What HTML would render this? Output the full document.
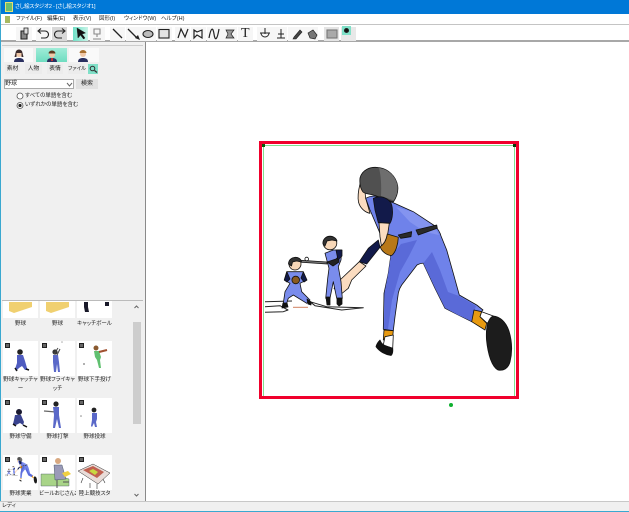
<!DOCTYPE html>
<html lang="ja"><head><meta charset="utf-8">
<style>
html,body{margin:0;padding:0;width:629px;height:512px;overflow:hidden;background:#f0f0f0}
body{position:relative;font-family:"Liberation Sans","Noto Sans CJK JP",sans-serif;color:#222;filter:blur(.25px);font-feature-settings:"palt"}
.a{position:absolute}
.t{position:absolute;font-size:5.5px;line-height:9px;white-space:nowrap;text-align:center;color:#222}
.l{position:absolute;width:37px;font-size:5.5px;line-height:8.500px;text-align:center;color:#222;white-space:nowrap;overflow:hidden}
.cell{position:absolute;width:35px;height:35px;background:#fff}
.cell i{position:absolute;left:2px;top:2px;width:3px;height:3px;border:1px solid #222;background:#666}
.tb{position:absolute;top:27px;width:15px;height:14px;background:#f6f6f6}
.tag{position:absolute;top:64px;height:10px;background:#ececec;font-size:5.8px;line-height:10px;text-align:center;color:#222;white-space:nowrap}
</style></head><body>
<div class="a" style="left:0;top:0;width:629px;height:14px;background:#0078d7"></div>
<div class="a" style="left:5px;top:2px;width:8px;height:10px;background:#6cc070;border:1px solid #e8e070;box-sizing:border-box"></div>
<div class="t" style="left:15px;top:2.500px;color:#fff;font-size:5.500px;letter-spacing:-.2px">さし絵スタジオ2 - [さし絵スタジオ1]</div>
<div class="a" style="left:0;top:14px;width:629px;height:10px;background:#fff"></div>
<div class="a" style="left:5px;top:16px;width:5px;height:7px;background:#a8b860"></div>
<div class="t" style="left:16px;top:15px">ファイル(F)</div>
<div class="t" style="left:47px;top:15px">編集(E)</div>
<div class="t" style="left:73px;top:15px">表示(V)</div>
<div class="t" style="left:99px;top:15px">図形(I)</div>
<div class="t" style="left:124px;top:15px">ウィンドウ(W)</div>
<div class="t" style="left:161px;top:15px">ヘルプ(H)</div>
<div class="a" style="left:0;top:24px;width:629px;height:18px;background:#fff;border-top:1px solid #c4c4c4;border-bottom:2px solid #a8a8a8;box-sizing:border-box"></div>
<div class="tb" style="left:16px;width:16px"></div><div class="tb" style="left:36px"></div><div class="tb" style="left:52px;background:#d8d8d8"></div>
<div class="tb" style="left:73px;background:linear-gradient(90deg,#6fe0c6,#c8f4e8)"></div><div class="tb" style="left:90px"></div>
<div class="tb" style="left:110px"></div><div class="tb" style="left:126px"></div><div class="tb" style="left:141px"></div><div class="tb" style="left:157px"></div><div class="tb" style="left:175px"></div><div class="tb" style="left:191px"></div><div class="tb" style="left:207px"></div><div class="tb" style="left:222px"></div><div class="tb" style="left:238px"></div><div class="tb" style="left:257px"></div><div class="tb" style="left:272px"></div><div class="tb" style="left:288px"></div><div class="tb" style="left:303px"></div>
<div class="tb" style="left:324px;background:#e4e4e4"></div><div class="tb" style="left:341px;background:#e8e8e8"></div>
<div class="a" style="left:342px;top:26px;width:9px;height:9px;background:#7fe0c8"></div>
<svg class="a" style="left:0;top:0" width="629" height="42" viewBox="0 0 629 42" fill="none" stroke="#222" stroke-width="1.100">
<path d="M21 31h6v8h-6z" fill="#888"/><path d="M24 28h4v6h-4z" fill="#ddd" stroke-width=".8"/>
<path d="M41 38h4a3.500 3.500 0 0 0 0-7h-6M41 28.500l-3 2.500 3 2.500"/>
<path d="M62 38h-4a3.500 3.500 0 0 1 0-7h6M62 28.500l3 2.500-3 2.500"/>
<path d="M77 28l1 10 2.500-3 3 4 1.500-1-3-4 3.500-1z" fill="#111" stroke-width=".5"/>
<path d="M94 29h6v5h-6zM97 34v3M93 39h8" stroke="#888"/>
<path d="M113 29l9 9M128 29l9 9" stroke-width="1.300"/><path d="M140 40l-5-2 3-3z" fill="#222" stroke="none"/>
<ellipse cx="148" cy="34" rx="5" ry="3.500" fill="#bbb"/>
<rect x="159" y="29.500" width="10" height="8.500" fill="#e4e4e4"/>
<path d="M178 38l3-9 4 8 3-8M194 30l3 2 5-2v8l-5-3-3 3zM209 38c2-11 4-11 5-4s3 7 5-5" stroke-width="1.200"/>
<path d="M226 30h8l-3 4 3 4h-8l2-4z" fill="#999" stroke-width=".7"/>
<path d="M261 33a4 4 0 1 0 8 0M265 28v6M260 33h10M277 38h8M281 29v9M278 34h6" stroke-width="1"/>
<path d="M293 39l1-2 6-7 2 2-6 7z" fill="#444" stroke-width=".6"/>
<path d="M308 33l5-3 4 5-2 4-5-1z" fill="#777" stroke-width=".7"/>
<rect x="327" y="30" width="10" height="8" fill="#aaa" stroke="#777"/>
<circle cx="346.500" cy="30.500" r="2" fill="#111"/>
</svg>
<div class="t" style="left:241px;top:27px;font:14px/14px 'Liberation Serif',serif;color:#222">T</div>

<div class="a" style="left:0;top:42px;width:146px;height:459px;background:#f0f0f0"></div>
<div class="a" style="left:2px;top:45px;width:141px;height:1px;background:#ccc"></div>
<div class="a" style="left:145px;top:42px;width:1px;height:459px;background:#8a8a8a"></div>
<div class="a" style="left:146px;top:42px;width:483px;height:459px;background:#fff"></div>
<div class="a" style="left:0;top:0;width:1px;height:512px;background:#3aa8d0"></div>

<div class="a" style="left:4px;top:48px;width:29px;height:14px;background:#f9f9f9"></div>
<div class="a" style="left:36px;top:48px;width:31px;height:14px;background:linear-gradient(#a0ecd8,#6fdcc0)"></div>
<div class="a" style="left:69px;top:48px;width:30px;height:14px;background:#f9f9f9"></div>
<svg class="a" style="left:0;top:48px" width="110" height="15" viewBox="0 0 110 15">
<circle cx="19" cy="6" r="3" fill="#f0c8a8"/><path d="M15.500 5a3.500 3.500 0 0 1 7 0l1 4h-2v-4h-5v4h-2z" fill="#3a2a2a"/><path d="M14 14c0-3 2-4 5-4s5 1 5 4z" fill="#2a3060"/>
<circle cx="52" cy="6.500" r="3" fill="#f0c8a8"/><path d="M48.500 5.500a3.500 3 0 0 1 7 0z" fill="#5a3a20"/><path d="M47 14c0-3 2-4 5-4s5 1 5 4z" fill="#2a3060"/><path d="M51 10h2v3h-2z" fill="#c03030"/>
<circle cx="83" cy="6" r="3" fill="#f0c8a8"/><path d="M79.500 5a3.500 3 0 0 1 7 0z" fill="#a87030"/><path d="M78 14c0-3 2-4 5-4s5 1 5 4z" fill="#2a3060"/>
</svg>
<div class="tag" style="left:5px;width:15px">素材</div>
<div class="tag" style="left:25px;width:17px">人物</div>
<div class="tag" style="left:47px;width:16px">表情</div>
<div class="tag" style="left:68px;width:17px;font-size:5.200px">ファイル</div>
<div class="tag" style="left:88px;width:10px;background:#7fe0c8"></div>
<svg class="a" style="left:88px;top:64px" width="10" height="10" viewBox="0 0 10 10" fill="none" stroke="#333"><circle cx="4.500" cy="4.500" r="2.300"/><path d="M6.500 6.500l2.500 2" stroke-width="1.300"/></svg>
<div class="a" style="left:4px;top:79px;width:70px;height:10px;background:#fff;border:1px solid #aaa;box-sizing:border-box"></div>
<div class="t" style="left:5px;top:79.500px;font-size:6px">野球</div>
<svg class="a" style="left:66px;top:82px" width="7" height="5" fill="none" stroke="#666"><path d="M1 1l2.500 3 2.500-3"/></svg>
<div class="a" style="left:76px;top:79px;width:22px;height:10px;background:#e1e1e1;font-size:6px;line-height:10px;text-align:center">検索</div>
<svg class="a" style="left:16px;top:91px" width="10" height="20" fill="#fff" stroke="#555" stroke-width=".8"><circle cx="4" cy="5" r="3"/><circle cx="4" cy="14.500" r="3"/><circle cx="4" cy="14.500" r="1.600" fill="#222" stroke="none"/></svg>
<div class="t" style="left:25px;top:91.500px">すべての単語を含む</div>
<div class="t" style="left:25px;top:101px">いずれかの単語を含む</div>

<!-- list -->
<div class="a" style="left:2px;top:300px;width:141px;height:1px;background:#bbb"></div>
<div class="a" style="left:3px;top:301px;width:35px;height:17px;background:#fff"></div>
<div class="a" style="left:40px;top:301px;width:35px;height:17px;background:#fff"></div>
<div class="a" style="left:77px;top:301px;width:35px;height:17px;background:#fff"></div>
<svg class="a" style="left:3px;top:301px" width="110" height="17" viewBox="0 0 110 17">
<path d="M6 1h23v5l-18 6-5-2z" fill="#f0d070"/><path d="M43 1h23v5l-18 6-5-2z" fill="#f0d070"/>
<path d="M81 1h4v5l1 5h-4l-1-5zM102 1h4v4h-4z" fill="#181828"/>
</svg>
<div class="l" style="left:2px;top:320px">野球</div>
<div class="l" style="left:39px;top:320px">野球</div>
<div class="l" style="left:76px;top:320px">キャッチボール</div>

<div class="cell" style="left:3px;top:341px"><i></i></div>
<div class="cell" style="left:40px;top:341px"><i></i></div>
<div class="cell" style="left:77px;top:341px"><i></i></div>
<div class="l" style="left:2px;top:376px">野球キャッチャ<br>ー</div>
<div class="l" style="left:39px;top:376px">野球フライキャ<br>ッチ</div>
<div class="l" style="left:76px;top:376px">野球下手投げ</div>

<div class="cell" style="left:3px;top:398px"><i></i></div>
<div class="cell" style="left:40px;top:398px"><i></i></div>
<div class="cell" style="left:77px;top:398px"><i></i></div>
<div class="l" style="left:2px;top:433px">野球守備</div>
<div class="l" style="left:39px;top:433px">野球打撃</div>
<div class="l" style="left:76px;top:433px">野球投球</div>

<div class="cell" style="left:3px;top:455px"><i></i></div>
<div class="cell" style="left:40px;top:455px"><i></i></div>
<div class="cell" style="left:77px;top:455px"><i></i></div>
<div class="l" style="left:2px;top:490px">野球実業</div>
<div class="l" style="left:39px;top:490px;height:9px">ビールおじさん2</div>
<div class="l" style="left:76px;top:490px;height:9px">陸上競技スタ</div>

<svg class="a" style="left:0;top:335px" width="115" height="160" viewBox="0 335 115 160">
<!-- row2 -->
<g><circle cx="20" cy="352" r="2.800" fill="#222"/><path d="M17 355h6l2 6 2 7 1 2-3 0-3-4-3 2-3 3-1-2 2-6z" fill="#4f5cc0"/><path d="M15 368l2 3M26 369l3 1" stroke="#111" stroke-width="1.500"/>
<circle cx="55" cy="352" r="2.600" fill="#333"/><path d="M53 355h5l1 7 1 10h-2l-1-8-1 8h-2l-1-10z" fill="#5a68c8"/><path d="M54 354l4-6M57 355l3-6" stroke="#444"/><circle cx="62" cy="342" r=".8" fill="#aaa"/>
<circle cx="96" cy="348" r="2.500" fill="#8a5a30"/><path d="M94 351h5l2 6-1 3 1 8h-2l-2-8-2-3z" fill="#60c070"/><path d="M99 352l8-2" stroke="#a05030" stroke-width="2"/><circle cx="84" cy="364" r="1" fill="#999"/></g>
<!-- row3 -->
<g><circle cx="19" cy="412" r="3" fill="#1a1a30"/><path d="M15 415h6l3 7-1 3-3-2-4 2-3-1 1-4z" fill="#3a4490"/><path d="M13 424l3 2M23 425l4 2" stroke="#111" stroke-width="1.500"/>
<path d="M44 411l12 1" stroke="#666" stroke-width="1.200"/><circle cx="56" cy="404" r="2.600" fill="#222"/><path d="M53 407h6v8l2 13h-2l-2-9-2 9h-2l1-13z" fill="#5a68c8"/>
<circle cx="94" cy="410" r="2.400" fill="#222"/><path d="M92 413h5v6l-1 3 1 5h-2l-1-4-2 4-1-1 1-6z" fill="#5a68c8"/><circle cx="81" cy="416" r=".8" fill="#888"/></g>
<!-- row4 -->
<g transform="translate(-29.500 435.300) scale(.13)"><use href="#fig"/></g>
<g>
<path d="M41 474h16l6 3 6 2v7h-28z" fill="#a8d488" stroke="#456" stroke-width=".4"/><circle cx="58" cy="461" r="3" fill="#d8a880"/><path d="M54 465h8l4 14-11 1z" fill="#9a9ab8" stroke="#345" stroke-width=".4"/><path d="M62 473l6-2 3 3-6 3z" fill="#f0d040"/><path d="M63 482h6M57 480v8" stroke="#555"/>
<path d="M78 471l15-7 17 9-12 11z" fill="#e8dcd8" stroke="#333" stroke-width=".5"/><path d="M83 470l10-4 11 6-7 6z" fill="#c06050"/><path d="M89 471l4-2 5 3-3 3z" fill="#c8d840"/><path d="M83 478l-2 5M90 483v5M97 484v5M103 479l2 4" stroke="#333" stroke-width=".6"/></g>
</svg>
<div class="a" style="left:133px;top:322px;width:8px;height:102px;background:#cdcdcd"></div>
<svg class="a" style="left:132px;top:301px" width="10" height="200" fill="none" stroke="#666"><path d="M2.500 7l2-2 2 2M2.500 193l2 2 2-2"/></svg>

<!-- status -->
<div class="a" style="left:0;top:501px;width:629px;height:11px;background:#f0f0f0;border-top:1px solid #c8c8c8;box-sizing:border-box"></div>
<div class="t" style="left:2px;top:502px">レディ</div>
<div class="a" style="left:0;top:511px;width:629px;height:1px;background:#3aa8d0"></div>

<!-- canvas frame -->
<div class="a" style="left:259px;top:141px;width:260px;height:258px;border:3px solid #f0002c;box-sizing:border-box"></div>
<div class="a" style="left:263px;top:145px;width:252px;height:251px;border:1px solid #80e090;border-bottom:0;box-sizing:border-box"></div>
<div class="a" style="left:262px;top:144px;width:3px;height:3px;background:#0a5a0a"></div>
<div class="a" style="left:513px;top:144px;width:3px;height:3px;background:#0a3a0a"></div>
<div class="a" style="left:449px;top:403px;width:4px;height:4px;border-radius:50%;background:#10b030"></div>

<svg class="a" style="left:0;top:0" width="629" height="512" viewBox="0 0 629 512" stroke="#111" stroke-width=".8" stroke-linejoin="round">
<g id="fig">
<!-- plate -->
<path d="M265 301.700L292 301M265 306.700L280 305.700 288 310 283.300 311.700 265 312.300M310 301.700L326.700 306.700 363.300 307.700 341.700 310 315 305.700z" fill="none" stroke="#222" stroke-width="1"/>
<path d="M293 307.300h15" stroke="#d08060" stroke-width="1"/>
<!-- main figure -->
<path d="M360 184C358.500 190 357.500 197 358.500 202 360 208 365 212.500 370 213.300L365.700 198.300 365 192z" fill="#fbdcc0"/>
<path d="M360 178C362 170 370 166.500 378 167.500 388 168.500 396 176 397.700 186 398.500 192 396 198 393.300 202L375 195.500C370 194 365 194 363 192 360 188 359.500 183 360 178z" fill="#505050"/>
<path d="M379 168C388 169 396 176 397.500 186 398 192 396 197 393.800 200.500L381 196C381.500 185 381 176 379 168z" fill="#6e6e6e" stroke="none"/>
<path d="M365.700 198.300C368 197 372 196 375 196L393.300 202.700 413.300 211.700 435 226C438 229 440 232 441 236L446.700 250 453.300 273.300 459.300 295 476.700 305 483 310 471.700 321.700 458.300 315 445 308.300 435 288.300 423.300 263.300C421 263 419 264 417 265L401.700 285C399 289 398.800 291 398.300 293.300L395 316.700 393.300 330.700 383.300 329.300 384 293.300 388.300 273.300 390.700 256.700 386.700 238.300 380 233.300 370 210z" fill="#6f82ea"/>
<path d="M390.700 256.700L401 244 417 240 409 256 400 272 392 300 388 329 384 329 384.500 293 388.300 273z" fill="#5a6ad8" stroke="none"/>
<path d="M423.300 263.300L432 252 440 270 448 292 459 296 476 306 471 321 458 315 445 308 435 288z" fill="#5a6ad8" stroke="none"/>
<path d="M396 207L413 212 434 226 439 235 425 232 410 222z" fill="#8494f0" stroke="none"/>
<path d="M373.300 198.300C377 196.500 380 196.500 383.300 197.300 388 199 391 202 391.700 205 393 210 393 218 390 223.300L378.300 222.700 375 210z" fill="#121a4a"/>
<path d="M379 222.700L389.300 223.300 387.300 236.700 386 246.700 381.700 248.300 380 236.700z" fill="#fbdcc0"/>
<path d="M387.300 234L398.300 237.300C398 244 396 252 391.700 255.500 387 255.500 382 252 380 246.700 383 245 386 242 387.300 234z" fill="#b87818"/>
<path d="M378.300 240L380 247.300 366.700 264 359.300 261.700 368.300 248.300z" fill="#121a4a"/>
<path d="M359.300 261.700L366 266 351.700 280 348.300 288.300 340 295 334 288.300 340 280z" fill="#fbdcc0"/>
<path d="M398.300 235L411.700 231.700 411 236.700 400.700 238.300zM416 230L436.700 225 437.300 228.300 418.300 235z" fill="#2a2a2a"/>
<path d="M384 330L393.300 330.700 392.700 336.700 383.300 340z" fill="#e89a10"/>
<path d="M385 336.700L393.300 335 392.700 348.300 383.300 345z" fill="#fff"/>
<path d="M380 340C381 343 383 345 386 346L392.700 348.300C393 351 393 354 391 355.500 386 355 380 352 376 346.700 376.500 344 378 342 380 340z" fill="#111"/>
<path d="M474 310L481.700 311.700 480 316.700 486.700 323.300 485 330 471.700 321.700z" fill="#e89a10"/>
<path d="M481.700 311.700L493.300 316 487.300 323.300 480 316.700z" fill="#fff"/>
<path d="M493 316C500 316.500 506 322 509 331 512 341 512.500 352 510 362 508 369 503 371 498 370 492 367 488 355 486.500 340 486 332 486 320 493 316z" fill="#1c1c1c"/>
<!-- batter -->
<circle cx="330" cy="243" r="6.800" fill="#f8d8b8"/><path d="M323 244c-1-9 12-10 14-3l-5-1-5 1-2 5z" fill="#333"/>
<path d="M325 253.300L333.300 250 341.700 250 341 260 338.300 266.700 341 281.700 342.300 298.300 336.700 298.300 333.300 281.700 330 298.300 325.700 298.300 327.700 278.300 329 268.300z" fill="#7a8cec"/>
<path d="M326 297h4v2l0 6-3 0zM337 298h5v6l-3 2-2-2z" fill="#111"/>
<path d="M297 260L327 262 327 264 297 262z" fill="#777"/>
<circle cx="306.700" cy="259" r="1.800" fill="#fff"/>
<path d="M327 262l9-3 3-3v6l-6 4z" fill="#222"/>
<path d="M336 250l6 0 0 6-4 4z" fill="#121a4a"/>
<!-- catcher -->
<circle cx="295" cy="264" r="6" fill="#f8d8b8"/><path d="M288.500 264c0-8 12-9 13-2l-5-1-4 1-1 4z" fill="#333"/>
<path d="M286.700 271.700L303.300 271.700 306.700 280 300 283.300 301.700 291.700 310 300 306.700 303.300 293.300 295 288.300 298.300 286.700 303.300 283.300 303.300 285 291.700 290 283.300 284.300 280z" fill="#7a8cec"/>
<path d="M284.300 280L287 272 290 279 287 282zM303.300 272L307 280 304 282 301 278z" fill="#121a4a"/>
<circle cx="295.700" cy="280" r="3.800" fill="#8a5a20"/>
<path d="M283 303l4 0 1 4-6 1zM307 299l4 3 0 3-3-1z" fill="#111"/>
</g>
</svg>
</body></html>
